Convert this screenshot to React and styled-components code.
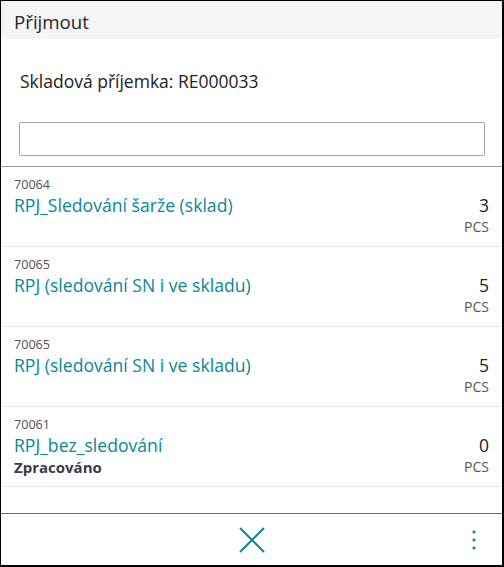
import React from 'react';
import styled, { createGlobalStyle } from 'styled-components';

const GlobalStyle = createGlobalStyle`
  html, body {
    margin: 0;
    padding: 0;
    background: #fff;
  }
  body {
    font-family: "Open Sans", "Noto Sans", sans-serif;
    color: #212121;
  }
`;

const lines = [
  { no: '70064', name: 'RPJ_Sledování šarže (sklad)', qty: 3, unit: 'PCS' },
  { no: '70065', name: 'RPJ (sledování SN i ve skladu)', qty: 5, unit: 'PCS' },
  { no: '70065', name: 'RPJ (sledování SN i ve skladu)', qty: 5, unit: 'PCS' },
  { no: '70061', name: 'RPJ_bez_sledování', qty: 0, unit: 'PCS', status: 'Zpracováno' },
];

const App = () => {
  return (
    <>
      <GlobalStyle />
      <Frame>
        <Header>
          <Title>Přijmout</Title>
        </Header>
        <Body>
          <DocLabel>Skladová příjemka: RE000033</DocLabel>
          <SearchBox>
            <SearchInput type="text" />
          </SearchBox>
          <List>
            {lines.map((line, i) => (
              <Row key={i}>
                <RowMain>
                  <ItemNo>{line.no}</ItemNo>
                  <ItemName>{line.name}</ItemName>
                  {line.status && <Status>{line.status}</Status>}
                </RowMain>
                <RowSide>
                  <Qty>{line.qty}</Qty>
                  <Unit>{line.unit}</Unit>
                </RowSide>
              </Row>
            ))}
          </List>
        </Body>
        <Footer>
          <FooterButton aria-label="Zavřít">
            <svg width="26" height="26" viewBox="0 0 26 26">
              <path d="M1 1 L25 25 M25 1 L1 25" stroke="#0a8791" strokeWidth="2" fill="none" />
            </svg>
          </FooterButton>
          <MoreButton aria-label="Další">
            <svg width="4" height="20" viewBox="0 0 4 20">
              <circle cx="2" cy="2" r="1.6" fill="#0a8791" />
              <circle cx="2" cy="10" r="1.6" fill="#0a8791" />
              <circle cx="2" cy="18" r="1.6" fill="#0a8791" />
            </svg>
          </MoreButton>
        </Footer>
      </Frame>
    </>
  );
};

const Frame = styled.div`
  box-sizing: border-box;
  width: 504px;
  height: 567px;
  border-top: 1px solid #000;
  border-left: 1px solid #000;
  border-right: 2px solid #000;
  border-bottom: 2px solid #000;
  display: flex;
  flex-direction: column;
  overflow: hidden;
`;

const Header = styled.div`
  box-sizing: border-box;
  height: 38px;
  background: #f4f5f7;
  display: flex;
  align-items: center;
  padding: 3px 0 0 13px;
`;

const Title = styled.h1`
  margin: 0;
  font-size: 18.7px;
  font-weight: 400;
  color: #262626;
`;

const Body = styled.div`
  flex: 1;
  display: flex;
  flex-direction: column;
`;

const DocLabel = styled.div`
  padding: 30px 0 0 19px;
  height: 52px;
  box-sizing: border-box;
  font-size: 17.5px;
  color: #212121;
`;

const SearchBox = styled.div`
  padding: 31px 17px 10px 18px;
  border-bottom: 1px solid #9a9a9a;
`;

const SearchInput = styled.input`
  box-sizing: border-box;
  width: 100%;
  height: 34px;
  border: 1px solid #a6a6a6;
  border-radius: 2px;
  outline: none;
  font-family: inherit;
  font-size: 16px;
`;

const List = styled.div`
  display: flex;
  flex-direction: column;
`;

const Row = styled.div`
  box-sizing: border-box;
  height: 80px;
  display: flex;
  justify-content: space-between;
  padding: 10px 13px 0 13px;
  border-bottom: 1px solid #e8e8e8;
`;

const RowMain = styled.div`
  display: flex;
  flex-direction: column;
`;

const ItemNo = styled.div`
  font-size: 12.6px;
  color: #505050;
  line-height: 16px;
`;

const ItemName = styled.div`
  font-size: 17.6px;
  color: #0a8791;
  line-height: 24px;
`;

const Status = styled.div`
  font-size: 15px;
  font-weight: 700;
  color: #3a3a48;
  line-height: 20px;
`;

const RowSide = styled.div`
  display: flex;
  flex-direction: column;
  align-items: flex-end;
  padding-top: 16px;
`;

const Qty = styled.div`
  font-size: 17.5px;
  color: #212121;
  line-height: 24px;
`;

const Unit = styled.div`
  font-size: 14px;
  color: #555;
  line-height: 20px;
`;

const Footer = styled.div`
  height: 51px;
  border-top: 1px solid #6e6e6e;
  display: flex;
  align-items: center;
  justify-content: center;
  position: relative;
`;

const FooterButton = styled.button`
  border: none;
  background: none;
  padding: 0;
  display: flex;
  cursor: pointer;
`;

const MoreButton = styled.button`
  position: absolute;
  right: 26px;
  top: 16px;
  border: none;
  background: none;
  padding: 0;
  display: flex;
  cursor: pointer;
`;

export default App;
